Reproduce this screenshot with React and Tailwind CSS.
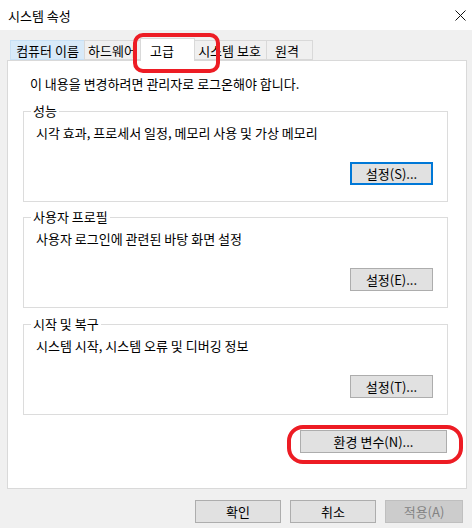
import React from "react";

const font = { fontFamily: '"Noto Sans CJK KR", "Noto Sans", sans-serif' };

const Btn = ({ children, focused, disabled, className = "" }) => (
  <button
    className={`flex items-center justify-center h-[23px] text-[13px] leading-none ${
      focused
        ? "border-2 border-[#0078d7] bg-[#e1e1e1] text-black"
        : disabled
        ? "border border-[#bfbfbf] bg-[#cccccc] text-[#838383]"
        : "border border-[#adadad] bg-[#e1e1e1] text-black"
    } ${className}`}
  >
    {children}
  </button>
);

const Group = ({ title, desc, button, focused, className = "" }) => (
  <div
    className={`relative ml-[15px] w-[425px] h-[91px] border border-[#dcdcdc] flex flex-col ${className}`}
  >
    <span className="absolute -top-[9px] left-[7px] bg-white px-[2px] text-[13px] leading-[16px]">
      {title}
    </span>
    <p className="mt-[13px] ml-[12px] text-[13px] leading-[16px]">{desc}</p>
    <Btn focused={focused} className="mt-[21px] ml-[326px] w-[83px]">
      {button}
    </Btn>
  </div>
);

const Tab = ({ label, active, hover, className = "" }) => (
  <div
    className={`flex items-center justify-center text-[13px] leading-none ${
      active
        ? "relative z-10 h-[23px] -mx-[2px] bg-white border border-b-0 border-[#d9d9d9]"
        : hover
        ? "h-[20px] mt-[2px] bg-[#d8eaf9] border border-[#c6dff4]"
        : "h-[20px] mt-[2px] bg-[#f0f0f0] border border-[#d9d9d9] -ml-px"
    } ${className}`}
  >
    {label}
  </div>
);

export default function App() {
  return (
    <div className="relative w-[472px] h-[528px] bg-[#f0f0f0] overflow-hidden text-black" style={font}>
      {/* title bar */}
      <div className="h-[30px] bg-white flex items-center justify-between pl-[8px] pr-[5px]">
        <span className="text-[13px] leading-none">시스템 속성</span>
        <svg width="11" height="11" viewBox="0 0 11 11" className="mr-[1px]">
          <path d="M0.5 0.5 L10.5 10.5 M10.5 0.5 L0.5 10.5" stroke="#111" strokeWidth="1" />
        </svg>
      </div>

      {/* tabs */}
      <div className="flex mt-[8px] ml-[10px] h-[23px] items-start relative z-10">
        <Tab label="컴퓨터 이름" hover className="w-[75px]" />
        <Tab label="하드웨어" className="w-[58px] justify-start pl-[3px] overflow-hidden whitespace-nowrap" />
        <Tab label="고급" active className="w-[55px] justify-start pl-[9px]" />
        <Tab label="시스템 보호" className="w-[75px]" />
        <Tab label="원격" className="w-[47px] justify-start pl-[8px]" />
      </div>

      {/* panel */}
      <div className="-mt-px ml-[7px] w-[460px] h-[429px] bg-white border border-[#d9d9d9] flex flex-col">
        <p className="mt-[15px] ml-[22px] text-[13px] leading-[16px]">
          이 내용을 변경하려면 관리자로 로그온해야 합니다.
        </p>
        <Group
          className="mt-[19px]"
          title="성능"
          desc="시각 효과, 프로세서 일정, 메모리 사용 및 가상 메모리"
          button="설정(S)..."
          focused
        />
        <Group
          className="mt-[15px]"
          title="사용자 프로필"
          desc="사용자 로그인에 관련된 바탕 화면 설정"
          button="설정(E)..."
        />
        <Group
          className="mt-[16px]"
          title="시작 및 복구"
          desc="시스템 시작, 시스템 오류 및 디버깅 정보"
          button="설정(T)..."
        />
        <div className="flex justify-end mt-[15px] mr-[19px]">
          <Btn className="w-[147px]">환경 변수(N)...</Btn>
        </div>
      </div>

      {/* bottom buttons */}
      <div className="flex mt-[11px] ml-[195px] gap-[9px]">
        <Btn className="w-[86px]">확인</Btn>
        <Btn className="w-[86px]">취소</Btn>
        <Btn disabled className="w-[78px]">적용(A)</Btn>
      </div>

      {/* red annotations */}
      <div className="absolute left-[133px] top-[33px] w-[87px] h-[40px] border-[4px] border-[#ed1c24] rounded-[10px] z-20" />
      <div className="absolute left-[287px] top-[425px] w-[176px] h-[39px] border-[4px] border-[#ed1c24] rounded-[16px] z-20" />
    </div>
  );
}
